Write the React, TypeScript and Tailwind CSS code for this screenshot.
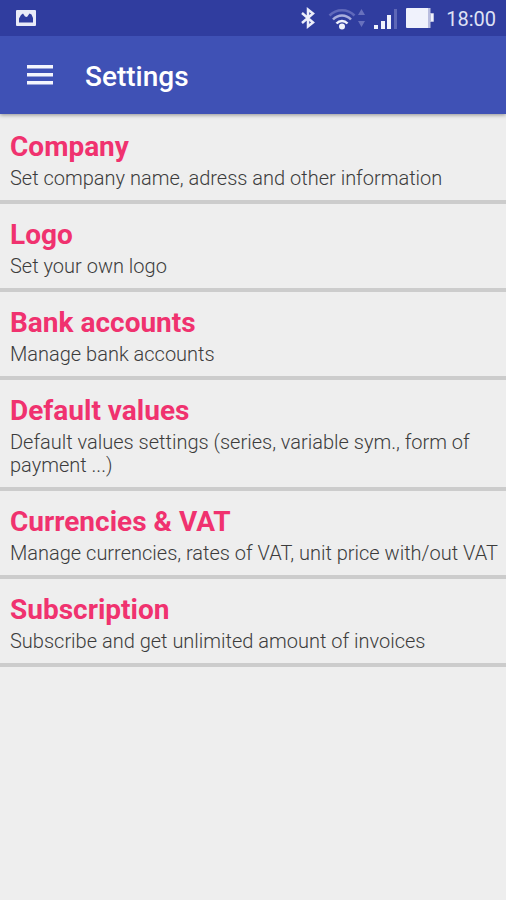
const sections = [
  { title: 'Company', description: 'Set company name, adress and other information' },
  { title: 'Logo', description: 'Set your own logo' },
  { title: 'Bank accounts', description: 'Manage bank accounts' },
  { title: 'Default values', description: 'Default values settings (series, variable sym., form of payment ...)' },
  { title: 'Currencies & VAT', description: 'Manage currencies, rates of VAT, unit price with/out VAT' },
  { title: 'Subscription', description: 'Subscribe and get unlimited amount of invoices' },
]

function PictureIcon() {
  return (
    <svg width="20" height="16" viewBox="0 0 20 16" aria-hidden="true">
      <path
        fill="#e9ebf8"
        fillRule="evenodd"
        d="M1 0h18a1 1 0 0 1 1 1v14a1 1 0 0 1-1 1H1a1 1 0 0 1-1-1V1a1 1 0 0 1 1-1zM3 12.500h14V8l-1.500-3.500L13.500 3.500l-2.500 3.500-2-.5L7 3.500 5 5 3 8.500z"
      />
    </svg>
  )
}

function BluetoothIcon() {
  return (
    <svg width="16" height="24" viewBox="0 0 16 24" fill="none" stroke="#eceefa" strokeWidth="2.500" aria-hidden="true">
      <path d="M2 7 13 16.500 8 20.500V3.500L13 7.500 2 17" />
    </svg>
  )
}

function WifiIcon() {
  return (
    <svg width="38" height="24" viewBox="0 0 38 24" fill="none" aria-hidden="true">
      <path d="M1.500 9.500C8.500 2.500 19.500 2.500 26.500 9.500" stroke="#6069bb" strokeWidth="2.500" />
      <path d="M5 13.500c5-5.500 13-5.500 18 0" stroke="#a9aedd" strokeWidth="2.500" />
      <path d="M8.500 17.500c3.200-3.500 7.800-3.500 11 0" stroke="#f0f2fc" strokeWidth="2.500" />
      <circle cx="14" cy="20.500" r="3" fill="#f0f2fc" />
      <path d="M33.500 3l3.500 6h-7zM33.500 21l-3.500-6h7z" fill="#6871bd" />
    </svg>
  )
}

function SignalIcon() {
  return (
    <svg width="24" height="22" viewBox="0 0 24 22" aria-hidden="true">
      <path d="M0 18h4v4H0zM7 14h4v8H7zM13 8h4v14h-4z" fill="#f0f2fc" />
      <path d="M20 2h3v20h-3z" fill="#5e67b7" />
    </svg>
  )
}

function BatteryIcon() {
  return (
    <svg width="28" height="20" viewBox="0 0 28 20" aria-hidden="true">
      <path d="M21 0h3.500v5H27a1 1 0 0 1 1 1v7a1 1 0 0 1-1 1h-2.500v6H21z" fill="#b9bddf" />
      <path d="M1 0h21v20H1a1 1 0 0 1-1-1V1a1 1 0 0 1 1-1z" fill="#f0f2fc" />
      <path d="M25 6h2v7h-2z" fill="#f0f2fc" />
    </svg>
  )
}

function MenuIcon() {
  return (
    <svg width="28" height="20" viewBox="0 0 28 20" aria-hidden="true">
      <path d="M1 0h26v3.500H1zM1 8h26v3.500H1zM1 16h26v3.500H1z" fill="#f4f5fd" />
    </svg>
  )
}

function StatusBar() {
  return (
    <div className="flex h-9 items-center justify-between bg-[#303d9f] pr-[10px] pl-4">
      <PictureIcon />
      <div className="flex items-center">
        <BluetoothIcon />
        <div className="ml-3">
          <WifiIcon />
        </div>
        <div className="ml-2">
          <SignalIcon />
        </div>
        <div className="ml-2">
          <BatteryIcon />
        </div>
        <span className="ml-3 pt-px text-[20px] leading-6 text-[#dfe2f5]">18:00</span>
      </div>
    </div>
  )
}

export default function App() {
  return (
    <div className="min-h-screen bg-[#eeeeee] font-[Roboto,sans-serif]">
      <header className="relative shadow-[0_1px_4px_rgba(0,0,0,0.4)]">
        <StatusBar />
        <div className="flex h-[78px] items-center bg-[#3f51b5] px-[26px]">
          <button type="button" aria-label="Open menu" className="flex">
            <MenuIcon />
          </button>
          <h1 className="ml-[31px] pt-1 text-[28px] leading-8 font-medium text-white">Settings</h1>
        </div>
      </header>

      <main className="pt-0.5">
        <ul>
          {sections.map((section) => (
            <li key={section.title} className="border-b-4 border-[#cccccc]">
              <a href="#" className="block pt-3 pr-2 pb-[10px] pl-[10px]">
                <h2 className="text-[28px] leading-[38px] font-bold text-[#f0326f]">{section.title}</h2>
                <p className="mt-px text-[20px] leading-[23px] font-light text-[#3c3c3c]">{section.description}</p>
              </a>
            </li>
          ))}
        </ul>
      </main>
    </div>
  )
}
